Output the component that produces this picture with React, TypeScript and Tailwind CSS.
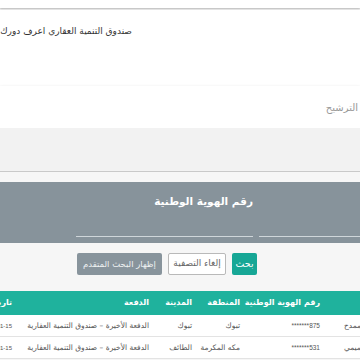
import React from "react"

const rows = [
  { name: "سعد الممدح", id: "*******875", region: "تبوك", city: "تبوك", pay: "الدفعة الأخيرة – صندوق التنمية العقارية", date: "2020-01-15" },
  { name: "خالد التميمي", id: "*******531", region: "مكه المكرمة", city: "الطائف", pay: "الدفعة الأخيرة – صندوق التنمية العقارية", date: "2020-01-15" },
]

export default function App() {
  return (
    <div
      dir="rtl"
      className="w-[360px] h-[360px] overflow-hidden bg-[#f6f6f6] text-[#444]"
      style={{ fontFamily: '"DejaVu Sans", "Noto Sans", sans-serif' }}
    >
      {/* top bar */}
      <div className="h-[8px] bg-white shadow-[0_1px_2px_rgba(0,0,0,0.25)]" />

      {/* title card */}
      <div className="mt-[2px] h-[76px] bg-white pr-[228px] pt-[15px] shadow-[0_1px_2px_rgba(0,0,0,0.12)]">
        <div className="whitespace-nowrap text-[9px] text-[#333]">صندوق التنمية العقاري اعرف دورك</div>
      </div>

      {/* filter input */}
      <div className="h-[42px] bg-white flex items-center pr-[2px] shadow-[0_1px_3px_rgba(0,0,0,0.15)]">
        <span className="whitespace-nowrap text-[10px] text-[#999]">الترشيح</span>
      </div>

      {/* grey band */}
      <div className="h-[44px] bg-[#f2f2f2] border-b border-[#c9c9c9]" />

      <div className="h-[10px]" />

      {/* search panel */}
      <div className="h-[61px] bg-[#87939b] flex gap-[6px] pt-[12px]">
        <div className="w-[101px] shrink-0 flex flex-col justify-end pb-[6px]">
          <div className="h-px bg-[#cfd6da]" />
        </div>
        <div className="w-[177px] shrink-0 flex flex-col justify-between pb-[6px]">
          <div className="text-[10.5px] font-bold text-white whitespace-nowrap">رقم الهوية الوطنية</div>
          <div className="h-px bg-[#cfd6da]" />
        </div>
      </div>

      {/* buttons */}
      <div className="flex gap-[6px] pr-[103px] mt-[10px]">
        <button className="h-[22px] w-[25px] rounded-[2px] bg-[#17a796] text-white text-[9.5px]">بحث</button>
        <button className="h-[22px] w-[58px] rounded-[2px] bg-white border border-[#b9b9b9] text-[#666] text-[9px] whitespace-nowrap">إلغاء التصفية</button>
        <button className="h-[22px] w-[85px] rounded-[2px] bg-[#88949c] text-[#eef1f2] text-[8.5px] whitespace-nowrap">إظهار البحث المتقدم</button>
      </div>

      {/* table */}
      <div className="mt-[16px]">
        <div className="flex h-[24px] items-center bg-[#1fb29d] text-white text-[8px] font-bold whitespace-nowrap">
          <div className="w-[32px] shrink-0" />
          <div className="w-[80px] shrink-0 pr-[8px]">رقم الهوية الوطنية</div>
          <div className="w-[48px] shrink-0 pr-[8px]">المنطقة</div>
          <div className="w-[43px] shrink-0 pr-[8px]">المدينة</div>
          <div className="w-[137px] shrink-0 pr-[8px]">الدفعة</div>
          <div className="w-[20px] shrink-0 pr-[8px] overflow-hidden">تاريخ الدفع</div>
        </div>
        {rows.map((r, i) => (
          <div key={i} className="flex h-[22px] items-center bg-white border-b border-[#e3e3e3] text-[7.5px] text-[#555] whitespace-nowrap">
            <div className="w-[32px] shrink-0 flex justify-end -mr-[16px]">
              <span>{r.name}</span>
            </div>
            <div className="w-[80px] shrink-0 pr-[8px] mr-[16px]">
              <span dir="ltr" className="text-[6.5px]" style={{ fontFamily: '"Liberation Sans", sans-serif' }}>{r.id}</span>
            </div>
            <div className="w-[48px] shrink-0 pr-[8px]">{r.region}</div>
            <div className="w-[43px] shrink-0 pr-[8px]">{r.city}</div>
            <div className="w-[137px] shrink-0 pr-[8px]">{r.pay}</div>
            <div className="w-[20px] shrink-0 pr-[8px]">
              <span dir="ltr" className="text-[6px]" style={{ fontFamily: '"Liberation Sans", sans-serif' }}>{r.date}</span>
            </div>
          </div>
        ))}
      </div>
    </div>
  )
}
